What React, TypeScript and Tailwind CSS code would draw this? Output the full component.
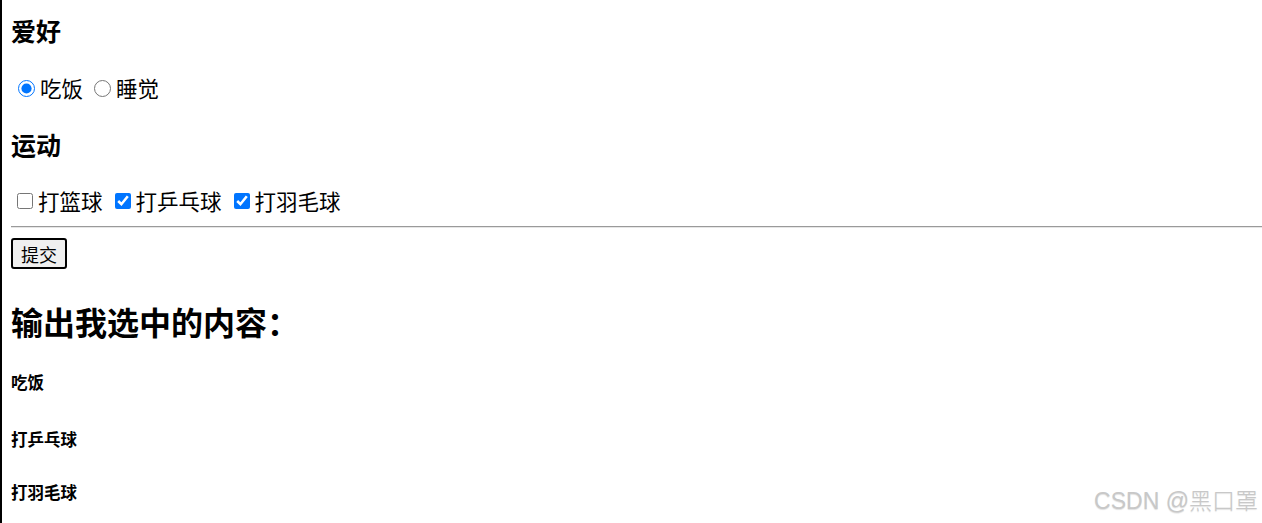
import React from "react";

const cjk = { fontFamily: '"Noto Sans CJK SC", "Liberation Sans", sans-serif' };

export default function App() {
  return (
    <div
      className="relative h-[523px] w-full overflow-hidden bg-white text-black"
      style={cjk}
    >
      <div className="flex h-full border-l-2 border-black pl-[9px]">
        <div className="flex w-full flex-col">
          <h3 className="mt-[18px] h-[25px] text-[25px] font-bold leading-[25px]">爱好</h3>

          <div className="mt-[32px] flex h-[26px] items-center text-[21.5px] leading-[26px]">
            <input type="radio" name="hobby" defaultChecked className="ml-[7px] mr-[5px] h-[17px] w-[17px] accent-[#0075ff]" />
            <span>吃饭</span>
            <input type="radio" name="hobby" className="ml-[11px] mr-[5px] h-[17px] w-[17px]" />
            <span>睡觉</span>
          </div>

          <h3 className="mt-[31px] h-[25px] text-[25px] font-bold leading-[25px]">运动</h3>

          <div className="mt-[31px] flex h-[26px] items-center text-[21.5px] leading-[26px]">
            <input type="checkbox" className="ml-[6px] mr-[5px] h-4 w-4" />
            <span>打篮球</span>
            <input type="checkbox" defaultChecked className="ml-[12px] mr-[5px] h-4 w-4 accent-[#0075ff]" />
            <span>打乒乓球</span>
            <input type="checkbox" defaultChecked className="ml-[12px] mr-[5px] h-4 w-4 accent-[#0075ff]" />
            <span>打羽毛球</span>
          </div>

          <div className="mt-[12px] h-[2px] w-full border-t border-b border-t-[#9a9a9a] border-b-[#e6e6e6]" />

          <div className="mt-[10px]">
            <button className="flex h-[31px] items-center rounded-[3px] border-2 border-black bg-[#efefef] px-[8px] text-[18px] leading-none">
              提交
            </button>
          </div>

          <h2 className="mt-[36px] h-[32px] text-[32px] font-bold leading-[32px]">输出我选中的内容：</h2>

          <h5 className="mt-[36px] h-[19px] text-[16.5px] font-bold leading-[19px]">吃饭</h5>
          <h5 className="mt-[38px] h-[19px] text-[16.5px] font-bold leading-[19px]">打乒乓球</h5>
          <h5 className="mt-[34px] h-[19px] text-[16.5px] font-bold leading-[19px]">打羽毛球</h5>
        </div>
      </div>

      <div
        className="absolute bottom-[9px] right-[4px] text-[23px] font-light leading-[26px] text-[#c8c8c8] [text-shadow:0_1px_1px_rgba(0,0,0,0.12)]"
        style={{ fontFamily: '"Liberation Sans", "Noto Sans CJK SC", sans-serif' }}
      >
        CSDN @黑口罩
      </div>
    </div>
  );
}
